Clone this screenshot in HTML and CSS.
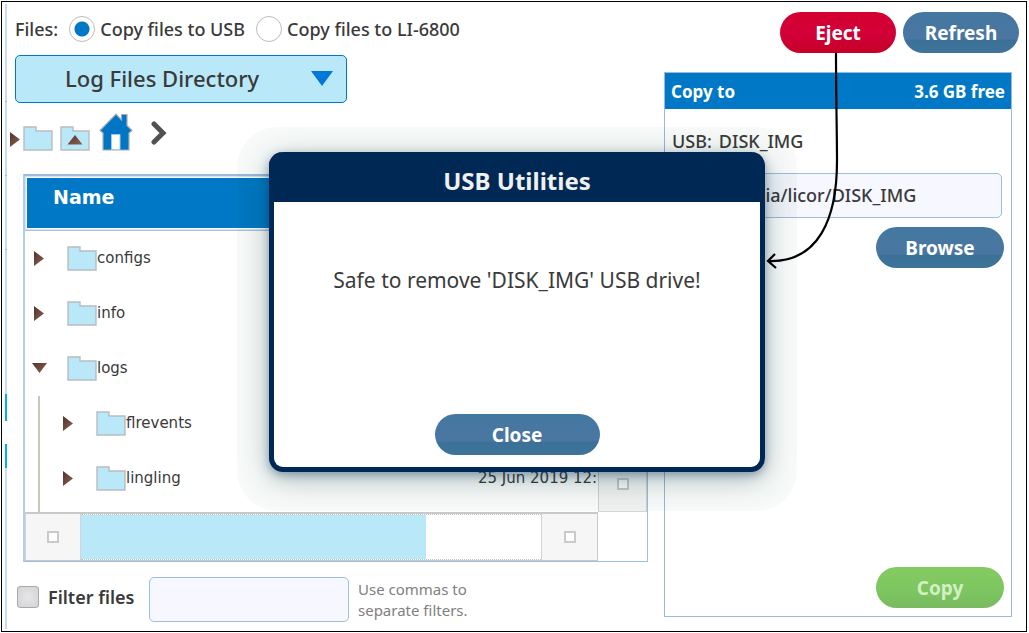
FILE: index.html
```html
<!DOCTYPE html>
<html lang="en">
<head>
<meta charset="utf-8">
<title>USB Utilities</title>
<link rel="stylesheet" href="styles.css">
</head>
<body>
<svg class="defs" aria-hidden="true">
  <defs>
    <linearGradient id="brown" x1="0" y1="0" x2="1" y2="1"><stop offset="0" stop-color="#54332b"/><stop offset="1" stop-color="#8a6257"/></linearGradient>
    <symbol id="folder" viewBox="0 0 30 25"><path d="M1 1H13V5H29V24H1Z" fill="#b9e8f8" stroke="#b9bcc2" stroke-width="1.4"/></symbol>
    <symbol id="right" viewBox="0 0 10 15"><path d="M0 0L10 7.500L0 15Z" fill="url(#brown)"/></symbol>
    <symbol id="down" viewBox="0 0 15 10"><path d="M0 0H15L7.500 10Z" fill="url(#brown)"/></symbol>
  </defs>
</svg>
<div class="screen">
  <div class="rail"></div>
  <main class="files">
    <div class="modes" role="radiogroup" aria-label="Files">
      <span>Files:</span>
      <label class="mode"><input class="radio" type="radio" name="mode" checked>Copy files to USB</label>
      <label class="mode"><input class="radio" type="radio" name="mode">Copy files to LI-6800</label>
    </div>
    <div class="picker">
      <select class="directory" aria-label="Directory"><option>Log Files Directory</option></select>
      <svg class="picker-arrow" viewBox="0 0 22 15"><path d="M0 0H22L11 15Z" fill="#0078d7"/></svg>
    </div>
    <nav class="path" aria-label="Path">
      <button class="icon" aria-label="Expand"><svg width="10" height="15"><use href="#right"/></svg></button>
      <button class="icon icon-folder" aria-label="Folder"><svg width="30" height="25"><use href="#folder"/></svg></button>
      <button class="icon icon-up" aria-label="Up one folder"><svg width="30" height="25"><use href="#folder"/><path d="M7.500 18.500H22.500L15 9Z" fill="url(#brown)"/></svg></button>
      <button class="icon icon-home" aria-label="Home"><svg width="34" height="38" viewBox="0 0 34 38"><path d="M1 17.500L17 1L22.500 7V1.500H28V12.500L33 17.500L30 20V37H4V20Z" fill="#0076c4" stroke="#a9adb2" stroke-width="1.200"/><path d="M12.500 36.500V21.500H21V36.500Z" fill="#fff" stroke="#a9c9e2"/></svg></button>
      <button class="icon icon-next" aria-label="Next"><svg width="16" height="24" viewBox="0 0 16 24"><path d="M3 3L12 12L3 21" fill="none" stroke="#515151" stroke-width="5" stroke-linecap="round" stroke-linejoin="miter"/></svg></button>
    </nav>
    <section class="browser">
      <div class="viewport">
        <table class="tree">
          <colgroup><col class="col-name"><col class="col-date"></colgroup>
          <thead><tr><th>Name</th><th aria-label="Modified"></th></tr></thead>
          <tbody>
            <tr><td><div class="entry"><button class="toggle" aria-label="Expand configs"><svg width="10" height="15"><use href="#right"/></svg></button><svg width="30" height="25"><use href="#folder"/></svg>configs</div></td><td></td></tr>
            <tr><td><div class="entry"><button class="toggle" aria-label="Expand info"><svg width="10" height="15"><use href="#right"/></svg></button><svg width="30" height="25"><use href="#folder"/></svg>info</div></td><td></td></tr>
            <tr><td><div class="entry"><button class="toggle toggle-open" aria-label="Collapse logs"><svg width="15" height="10"><use href="#down"/></svg></button><svg width="30" height="25"><use href="#folder"/></svg>logs</div></td><td></td></tr>
            <tr class="child"><td><div class="entry"><button class="toggle" aria-label="Expand flrevents"><svg width="10" height="15"><use href="#right"/></svg></button><svg width="30" height="25"><use href="#folder"/></svg>flrevents</div></td><td></td></tr>
            <tr class="child"><td><div class="entry"><button class="toggle" aria-label="Expand lingling"><svg width="10" height="15"><use href="#right"/></svg></button><svg width="30" height="25"><use href="#folder"/></svg>lingling</div></td><td>25 Jun 2019 12:</td></tr>
            <tr class="child tail"><td></td><td></td></tr>
          </tbody>
        </table>
      </div>
      <div class="vscroll"><button class="step" aria-label="Scroll down"><i class="mark"></i></button></div>
      <div class="hscroll">
        <button class="step" aria-label="Scroll left"><i class="mark"></i></button>
        <div class="track"><div class="thumb"></div></div>
        <button class="step" aria-label="Scroll right"><i class="mark"></i></button>
      </div>
    </section>
    <div class="filter">
      <label class="filter-label"><input class="check" type="checkbox">Filter files</label>
      <input class="field filter-field" type="text" aria-label="Filters" aria-describedby="hint">
      <span class="hint" id="hint">Use commas to<br>separate filters.</span>
    </div>
  </main>
  <aside class="side">
    <div class="actions">
      <button class="pill pill-eject">Eject</button>
      <button class="pill">Refresh</button>
    </div>
    <section class="target">
      <header class="target-head"><span>Copy to</span><span>3.6 GB free</span></header>
      <p class="drive"><span>USB:</span><span>DISK_IMG</span></p>
      <input class="field dest" type="text" value="/media/licor/DISK_IMG" aria-label="Destination">
      <button class="pill pill-wide">Browse</button>
      <button class="pill pill-wide pill-copy" disabled>Copy</button>
    </section>
  </aside>
  <div class="dialog" role="dialog" aria-labelledby="dialog-title">
    <h1 class="dialog-title" id="dialog-title">USB Utilities</h1>
    <p class="message">Safe to remove 'DISK_IMG' USB drive!</p>
    <button class="pill pill-close">Close</button>
  </div>
  <svg class="pointer" viewBox="0 0 76 218" aria-hidden="true"><path d="M71 0C71 44 72 80 72 108C72 165 54 210 3 208M10 201L3 208L11 215" fill="none" stroke="#000" stroke-width="2.200"/></svg>
</div>
</body>
</html>
```
FILE: styles.css
```css
* { box-sizing: border-box; }

body {
  margin: 0;
  padding: 1px 2px 2px 1px;
  background: #fff;
  color: #3a3a3a;
  font-family: "Noto Sans", "Open Sans", sans-serif;
  font-size: 18px;
  font-weight: 500;
}

button, input, select { font: inherit; color: inherit; }
button { padding: 0; border: 0; background: none; }
svg { display: block; flex: none; }
.defs { position: absolute; width: 0; height: 0; }

.screen {
  position: relative;
  display: grid;
  grid-template-columns: 3px minmax(0, 1fr) 356px;
  min-height: calc(100vh - 3px);
  padding: 2px 6px 2px 3px;
  border: 1px solid #000;
}

.rail {
  background:
    linear-gradient(#00aeef, #00aeef) 0 390px / 2px 27px no-repeat,
    linear-gradient(#00aeef, #00aeef) 0 440px / 2px 24px no-repeat,
    linear-gradient(#fff, #fff) 0 417px / 3px 23px no-repeat,
    repeating-linear-gradient(#c8dbf2 0 73px, #9dbbe0 73px 74px) 0 24px / 2px 293px no-repeat,
    linear-gradient(#c8dbf2, #c8dbf2) 0 0 / 2px 100% no-repeat;
}

.files {
  display: flex;
  flex-direction: column;
  padding: 12px 16px 7px 7px;
}

.modes, .mode { display: flex; align-items: center; }
.modes { gap: 11px; height: 26px; }
.mode { gap: 5px; }

.radio {
  width: 26px;
  height: 26px;
  margin: 0;
  appearance: none;
  border: 1px solid #bcbcbc;
  border-radius: 50%;
  background: #fff;
}
.radio:checked { background: radial-gradient(circle, #0078c4 7px, #fff 8px); }

.picker {
  position: relative;
  width: 332px;
  margin-top: 13px;
}
.directory {
  display: block;
  width: 100%;
  height: 48px;
  padding: 0 48px 2px 49px;
  appearance: none;
  border: 1px solid #0078c8;
  border-radius: 5px;
  background: #b9e8f8;
  font-size: 22px;
}
.picker-arrow {
  position: absolute;
  top: 16px;
  right: 14px;
  width: 22px;
  pointer-events: none;
}

.path {
  display: flex;
  align-items: flex-end;
  height: 39px;
  margin: 9px 0 23px -5px;
}
.icon:first-child { padding-bottom: 4px; }
.icon-folder { margin-left: 3px; }
.icon-up { margin-left: 7px; }
.icon-home { margin-left: 9px; }
.icon-next { margin-left: 18px; padding-bottom: 6px; }

.browser {
  display: grid;
  flex: 1;
  grid-template-columns: minmax(0, 1fr) 49px;
  grid-template-rows: 1fr 49px;
  margin-left: 8px;
  border: 1px solid #9dbde2;
  border-left: 2px solid #b3cdec;
  border-top: 2px solid #9dbadf;
}

.viewport { overflow: hidden; }
.tree {
  width: 650px;
  table-layout: fixed;
  border-collapse: collapse;
  font-family: "DejaVu Sans", sans-serif;
  font-size: 15px;
  font-weight: 400;
}
.col-name { width: 453px; }
.tree th {
  height: 55px;
  padding: 0 28px 13px;
  background: #0078c6;
  box-shadow: inset 0 -1px #a9c5e6, inset 0 -2px #d5e3f4, inset 1px 1px #d5e3f4, inset 0 -3px #fff, inset 2px 2px #fff;
  color: #fff;
  font-size: 19px;
  font-weight: 700;
  text-align: left;
}
.tree td { height: 55px; padding: 0 0 1px; white-space: nowrap; }
.tree .tail td { height: 6px; padding: 0; }
.entry { display: flex; align-items: center; padding-left: 7px; }
.child .entry { padding-left: 36px; }
.child td:first-child { background: linear-gradient(#c8c8bc, #c8c8bc) 13px 0 / 2px 100% no-repeat; }
.toggle {
  display: flex;
  width: 35px;
  padding-left: 2px;
}
.toggle-open { padding-left: 0; }

.vscroll { display: flex; align-items: flex-end; }
.vscroll .step { width: 100%; }
.hscroll {
  display: flex;
  border: 1px solid #c9c9c9;
  border-width: 2px 1px 1px 0;
}
.step {
  display: flex;
  align-items: center;
  justify-content: center;
  width: 56px;
  height: 56px;
  border: 1px solid #d4d4d4;
  background: #f6f6f6;
}
.hscroll .step { height: auto; border-width: 0 1px; }
.hscroll .step:last-child { border-right: 0; }
.mark {
  width: 12px;
  height: 12px;
  border: 2px solid #cacaca;
  background: #fff;
}
.track {
  flex: 1;
  border: 1px dotted #c4c4c4;
  border-width: 1px 0;
}
.thumb {
  width: 75%;
  height: 100%;
  background: #b9e8f8;
}

.filter {
  display: flex;
  align-items: center;
  gap: 9px;
  margin-top: 15px;
}
.filter-label {
  display: flex;
  align-items: center;
  gap: 9px;
  width: 125px;
  padding: 0 0 5px 2px;
  font-weight: 600;
  white-space: nowrap;
}
.check {
  width: 22px;
  height: 22px;
  margin: 0;
  appearance: none;
  border: 1px solid #a8a8ac;
  border-radius: 3px;
  background: radial-gradient(#e6e6e8, #d3d3d6);
}
.field {
  height: 45px;
  border: 1px solid #9dbde2;
  border-radius: 5px;
  background: #f6f7ff;
}
.filter-field { width: 200px; }
.hint {
  color: #808080;
  font-size: 15px;
  font-weight: 400;
  line-height: 21px;
}

.side {
  display: flex;
  flex-direction: column;
  padding: 8px 0 12px;
}
.actions {
  display: flex;
  justify-content: flex-end;
  gap: 7px;
  margin-right: 1px;
}
.pill {
  width: 116px;
  height: 41px;
  border-radius: 21px;
  background: linear-gradient(#4378a0, #4a76a2 65%, #3b7196 70%, #3e7499);
  color: #fff;
  font-size: 19px;
  font-weight: 700;
}
.pill-eject { background: linear-gradient(#d40030, #d20038 50%, #c60029); }
.pill-wide { width: 128px; }
.pill-copy {
  margin-top: auto;
  background: linear-gradient(#84cb60, #7cc560 60%, #79b95f);
  color: #d2efc4;
}

.target {
  display: flex;
  flex: 1;
  flex-direction: column;
  align-items: flex-end;
  margin: 19px 8px 0 0;
  padding: 0 7px 8px;
  border: 1px solid #9ab9de;
}
.target-head {
  display: flex;
  align-items: center;
  align-self: stretch;
  justify-content: space-between;
  height: 36px;
  margin: 0 -7px;
  padding: 0 6px;
  background: #0078c6;
  color: #fff;
  font-size: 17px;
  font-weight: 700;
}
.drive {
  display: flex;
  align-self: stretch;
  gap: 7px;
  height: 24px;
  margin: 20px 0;
  line-height: 24px;
}
.dest {
  width: 294px;
  margin: 0 2px 9px 0;
  padding: 0 11px 2px;
}

.dialog {
  position: absolute;
  top: 150px;
  left: calc(50% - 245px);
  display: flex;
  flex-direction: column;
  align-items: center;
  width: 496px;
  height: 320px;
  padding-bottom: 12px;
  border: 5px solid #002855;
  border-top: 0;
  border-radius: 14px;
  background: #fff;
  box-shadow: 0 3px 10px rgba(0, 40, 85, .35), 0 7px 30px rgba(0, 50, 60, .3), 0 7px 1px 32px rgba(0, 80, 20, .03);
}
.dialog-title {
  align-self: stretch;
  height: 50px;
  margin: 0 -5px;
  padding-top: 9px;
  border-radius: 14px 14px 0 0;
  background: #002855;
  color: #f0f0f0;
  font-size: 24px;
  font-weight: 700;
  line-height: 40px;
  text-align: center;
}
.message {
  margin: 64px 0 auto;
  font-size: 21px;
  font-weight: 400;
  line-height: 28px;
}
.pill-close { width: 165px; }

.pointer {
  position: absolute;
  top: 51px;
  right: 185px;
  width: 76px;
  pointer-events: none;
}
```
